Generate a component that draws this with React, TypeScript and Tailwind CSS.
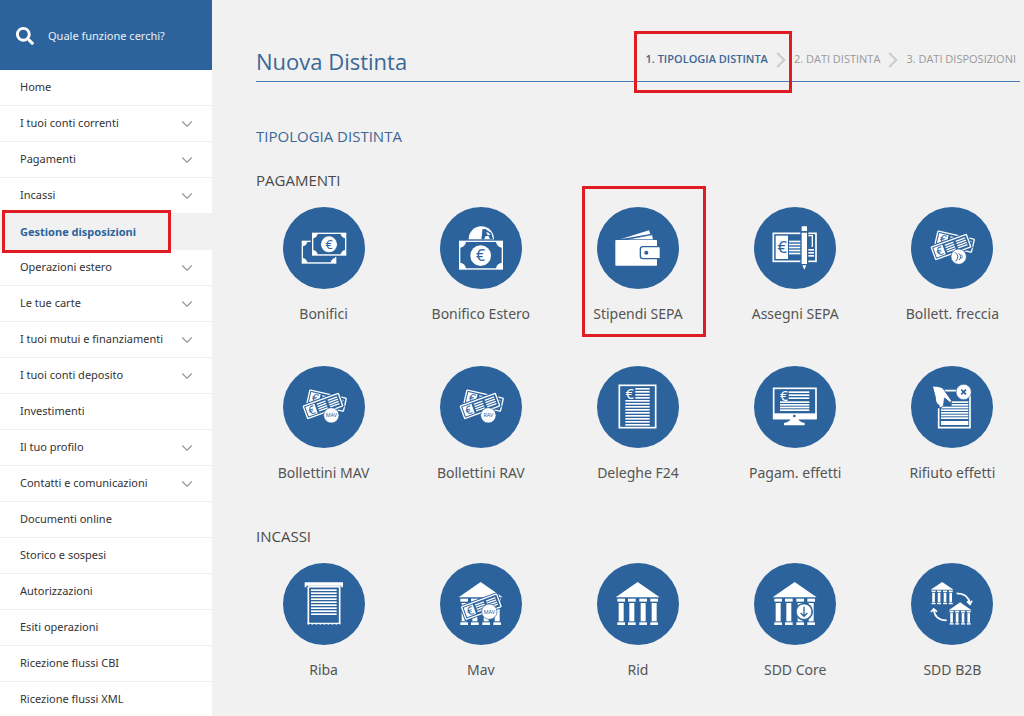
import { Fragment, type ReactNode } from 'react';
import { ChevronDown, ChevronRight } from 'lucide-react';
import { FaSearch } from 'react-icons/fa';

const BLUE = '#2c639c';

const menu = [
  { label: 'Home' },
  { label: 'I tuoi conti correnti', expandable: true },
  { label: 'Pagamenti', expandable: true },
  { label: 'Incassi', expandable: true },
  { label: 'Gestione disposizioni', active: true },
  { label: 'Operazioni estero', expandable: true },
  { label: 'Le tue carte', expandable: true },
  { label: 'I tuoi mutui e finanziamenti', expandable: true },
  { label: 'I tuoi conti deposito', expandable: true },
  { label: 'Investimenti' },
  { label: 'Il tuo profilo', expandable: true },
  { label: 'Contatti e comunicazioni', expandable: true },
  { label: 'Documenti online' },
  { label: 'Storico e sospesi' },
  { label: 'Autorizzazioni' },
  { label: 'Esiti operazioni' },
  { label: 'Ricezione flussi CBI' },
  { label: 'Ricezione flussi XML' },
];

const steps = ['1. TIPOLOGIA DISTINTA', '2. DATI DISTINTA', '3. DATI DISPOSIZIONI'];

type BoxProps = { x: number; y: number; w: number; h: number };

// All icons share a 246 unit canvas, three units to a pixel
const Euro = ({ x, y, size, fill = BLUE }: { x: number; y: number; size: number; fill?: string }) => (
  <text x={x} y={y + size * 0.36} fontSize={size} fill={fill} textAnchor="middle">€</text>
);

const Lines = ({ x, y, w, count, step = 9, h = 5 }: { x: number; y: number; w: number; count: number; step?: number; h?: number }) => (
  <>
    {[...Array(count)].map((_, i) => (
      <rect key={i} x={x} y={y + i * step} width={w} height={h} fill="white" />
    ))}
  </>
);

const Banknote = ({ x, y, w, h, corner = 17 }: BoxProps & { corner?: number }) => (
  <>
    <rect x={x - 4} y={y - 4} width={w + 8} height={h + 8} fill={BLUE} />
    <rect x={x} y={y} width={w} height={h} fill="white" />
    <path
      fill={BLUE}
      d={`M${x + corner} ${y + 4}H${x + w - corner}A${corner} ${corner} 0 0 0 ${x + w - 4} ${y + corner}V${y + h - corner}A${corner} ${corner} 0 0 0 ${x + w - corner} ${y + h - 4}H${x + corner}A${corner} ${corner} 0 0 0 ${x + 4} ${y + h - corner}V${y + corner}A${corner} ${corner} 0 0 0 ${x + corner} ${y + 4}Z`}
    />
  </>
);

const Slip = ({ cx, cy, angle }: { cx: number; cy: number; angle: number }) => (
  <g transform={`translate(${cx} ${cy}) rotate(${angle})`}>
    <rect x="-61" y="-25" width="122" height="50" rx="3" fill={BLUE} />
    <rect x="-56" y="-20" width="112" height="40" rx="2" fill={BLUE} stroke="white" strokeWidth="4" />
    <rect x="-51" y="-15" width="29" height="30" fill="white" />
    <Euro x={-36} y={0} size={34} />
    <Lines x={-16} y={-13} w={28} count={4} step={7} h={4} />
    <Lines x={19} y={-13} w={30} count={4} step={7} h={4} />
  </g>
);

const Badge = ({ x, y, r = 23, children }: { x: number; y: number; r?: number; children: ReactNode }) => (
  <>
    <circle cx={x} cy={y} r={r} fill="white" stroke={BLUE} strokeWidth="2" />
    {children}
  </>
);

const BadgeText = ({ x, y, children }: { x: number; y: number; children: string }) => (
  <Badge x={x} y={y}>
    <text x={x} y={y + 6} fontSize="16" fill={BLUE} textAnchor="middle">{children}</text>
  </Badge>
);

const Bank = () => (
  <g fill="white">
    <path d="M122 57L188 103H56Z" />
    {[61, 93, 127, 160].map((x) => (
      <Fragment key={x}>
        <rect x={x} y="107" width="23" height="9" />
        <rect x={x + 4} y="120" width="15" height="55" />
        <rect x={x} y="178" width="23" height="8" />
      </Fragment>
    ))}
  </g>
);

const SlipPair = () => (
  <>
    <Slip cx={131} cy={104} angle={13} />
    <Slip cx={120} cy={120} angle={-20} />
  </>
);

const icons: Record<string, ReactNode> = {
  transfer: (
    <>
      <Banknote x={56} y={101} w={104} h={69} />
      <Banknote x={87} y={77} w={103} h={69} />
      <circle cx="138" cy="112" r="24" fill="white" />
      <Euro x={138} y={112} size={38} />
    </>
  ),
  foreign: (
    <>
      <circle cx="124" cy="96" r="38" fill="white" />
      <path fill={BLUE} d="M127 67l9-1 18 12 5 18h-9l-5-10-9 2-3 9h-9l2-16z" />
      <path fill="white" d="M138 75l9 3 4 7-8-1z" />
      <Banknote x={57} y={101} w={132} h={87} corner={21} />
      <circle cx="122" cy="146" r="31" fill="white" />
      <Euro x={122} y={146} size={48} />
    </>
  ),
  wallet: (
    <>
      <path fill="white" d="M70 97L156 70l4 11z" />
      <path fill="white" stroke={BLUE} strokeWidth="2" d="M86 98l80-15 3 15z" />
      <rect x="55" y="99" width="125" height="77" rx="2" fill="white" />
      <path fill="white" stroke={BLUE} strokeWidth="4" d="M190 119h-52q-8 0-8 8v20q0 8 8 8h52z" />
      <circle cx="148" cy="137" r="6" fill={BLUE} />
    </>
  ),
  cheque: (
    <>
      <rect x="58" y="79" width="128" height="84" fill="none" stroke="white" strokeWidth="5" />
      <rect x="65" y="86" width="37" height="70" fill="white" />
      <Euro x={85} y={121} size={50} />
      <Lines x={105} y={101} w={36} count={5} />
      <Lines x={162} y={126} w={18} count={3} />
      <path d="M162 86h13v34" fill="none" stroke="white" strokeWidth="4" />
      <path d="M139 54h24v122l-12 18-12-18z" fill={BLUE} />
      <path d="M143 58h16v14h-16zM143 77h16v94h-16zM145 175h12l-6 13z" fill="white" />
    </>
  ),
  arrowSlip: (
    <>
      <SlipPair />
      <Badge x={143} y={149}>
        <path d="M132 136q16 12 2 27M143 139q12 10 1 20" fill="none" stroke={BLUE} strokeWidth="3" />
        <path d="M151 142q6 7 0 14" fill="none" stroke={BLUE} strokeWidth="2" />
      </Badge>
    </>
  ),
  mavSlip: (
    <>
      <SlipPair />
      <BadgeText x={145} y={148}>MAV</BadgeText>
    </>
  ),
  ravSlip: (
    <>
      <SlipPair />
      <BadgeText x={145} y={148}>RAV</BadgeText>
    </>
  ),
  form: (
    <>
      <rect x="67" y="58" width="109" height="127" fill="none" stroke="white" strokeWidth="5" />
      <Euro x={98} y={82} size={44} fill="white" />
      <Lines x={115} y={66} w={43} count={4} />
      <Lines x={85} y={102} w={73} count={9} />
    </>
  ),
  monitor: (
    <>
      <rect x="59" y="67" width="127" height="90" fill="none" stroke="white" strokeWidth="5" />
      <Euro x={90} y={90} size={42} fill="white" />
      <Lines x={104} y={76} w={62} count={3} />
      <Lines x={78} y={106} w={88} count={4} step={8} />
      <rect x="57" y="142" width="131" height="18" fill="white" />
      <circle cx="121" cy="150" r="4" fill={BLUE} />
      <path d="M109 158h25q-1 9 18 13v7H90v-7q19-4 19-13z" fill="white" />
    </>
  ),
  reject: (
    <>
      <path d="M98 74h79v111H83v-58" fill="none" stroke="white" strokeWidth="5" />
      <Lines x={122} y={106} w={50} count={2} step={8} />
      <Lines x={90} y={122} w={82} count={5} step={8} />
      <rect x="90" y="165" width="82" height="12" fill="white" />
      <path
        d="M64 60q12 0 24 3 9 2 13 11l21 30q0 6-6 5l-14-12q-3-1-2 3l-2 18q-3 7-10 7-4 0-4-7-12-7-11-24z"
        fill="white"
        stroke={BLUE}
        strokeWidth="3"
      />
      <Badge x={158} y={78}>
        <path d="M151 71l14 14M165 71l-14 14" stroke={BLUE} strokeWidth="5" />
      </Badge>
    </>
  ),
  receipt: (
    <>
      <path d="M65 58h115v15h-5v-5H70v5h-5z" fill="white" />
      <path d="M76 71h94v112M76 71v112" fill="none" stroke="white" strokeWidth="5" />
      <path d="M74 185v-6h98v6l-6-3-6 3-6-3-6 3-6-3-6 3-6-3-6 3-6-3-6 3-6-3-6 3-6-3-6 3-6-3-6 3z" fill="white" />
      <Lines x={84} y={79} w={77} count={9} />
    </>
  ),
  bankMav: (
    <>
      <Bank />
      <Slip cx={124} cy={131} angle={-20} />
      <BadgeText x={148} y={146}>MAV</BadgeText>
    </>
  ),
  bank: <Bank />,
  bankDown: (
    <>
      <Bank />
      <circle cx="150" cy="146" r="27" fill={BLUE} />
      <Badge x={150} y={146}>
        <path d="M150 131v28M140 150l10 10 10-10" fill="none" stroke={BLUE} strokeWidth="4" />
      </Badge>
    </>
  ),
  bankExchange: (
    <>
      <g transform="translate(30 27) scale(.52)"><Bank /></g>
      <g transform="translate(84 88) scale(.52)"><Bank /></g>
      <path d="M137 91q34 0 40 30M168 115l9 9 6-11M107 172q-35 0-39-33M60 147l8-9 10 8" fill="none" stroke="white" strokeWidth="5" />
    </>
  ),
};

const sections = [
  {
    title: 'PAGAMENTI',
    items: [
      { label: 'Bonifici', icon: 'transfer' },
      { label: 'Bonifico Estero', icon: 'foreign' },
      { label: 'Stipendi SEPA', icon: 'wallet', marked: true },
      { label: 'Assegni SEPA', icon: 'cheque' },
      { label: 'Bollett. freccia', icon: 'arrowSlip' },
      { label: 'Bollettini MAV', icon: 'mavSlip' },
      { label: 'Bollettini RAV', icon: 'ravSlip' },
      { label: 'Deleghe F24', icon: 'form' },
      { label: 'Pagam. effetti', icon: 'monitor' },
      { label: 'Rifiuto effetti', icon: 'reject' },
    ],
  },
  {
    title: 'INCASSI',
    items: [
      { label: 'Riba', icon: 'receipt' },
      { label: 'Mav', icon: 'bankMav' },
      { label: 'Rid', icon: 'bank' },
      { label: 'SDD Core', icon: 'bankDown' },
      { label: 'SDD B2B', icon: 'bankExchange' },
    ],
  },
];

const Sidebar = () => (
  <aside className="w-[212px] shrink-0 bg-white font-['Noto_Sans',sans-serif] text-[11px]">
    <label className="flex h-[70px] items-center gap-[14px] bg-[#2c639c] pt-[2px] pl-4 text-white">
      <FaSearch className="size-[18px] shrink-0" />
      <input
        type="search"
        aria-label="Cerca una funzione"
        placeholder="Quale funzione cerchi?"
        className="w-full min-w-0 bg-transparent outline-none placeholder:text-white/90"
      />
    </label>
    <nav>
      <ul>
        {menu.map((item) => (
          <li key={item.label} className="relative">
            <a
              href="#"
              className={
                item.active
                  ? 'flex h-9 items-center bg-[#f1f1f1] pr-4 pl-5 font-bold text-[#2c639c]'
                  : 'flex h-9 items-center justify-between border-b border-[#efefef] pr-4 pl-5 text-[#333]'
              }
            >
              {item.label}
              {item.expandable && <ChevronDown size={18} strokeWidth={1.5} className="text-[#999]" />}
            </a>
            {item.active && (
              <span className="pointer-events-none absolute -top-1 left-[2px] z-10 h-[43px] w-[169px] border-3 border-[#e01b22]" />
            )}
          </li>
        ))}
      </ul>
    </nav>
  </aside>
);

const Steps = () => (
  <ol className="flex items-center pr-1 text-[11px] whitespace-nowrap text-[#999]">
    {steps.map((step, index) => (
      <Fragment key={step}>
        {index > 0 && (
          <li aria-hidden="true">
            <ChevronRight size={26} strokeWidth={2} className="text-[#ccc]" />
          </li>
        )}
        <li className="relative">
          <a href="#" className={index === 0 ? 'font-semibold text-[#3c6796]' : ''}>{step}</a>
          {index === 0 && (
            <span className="pointer-events-none absolute -top-5 -right-6 -left-3 h-[62px] border-3 border-[#e01b22]" />
          )}
        </li>
      </Fragment>
    ))}
  </ol>
);

export default function App() {
  return (
    <div className="flex min-h-screen overflow-hidden bg-[#f1f1f1] font-['Open_Sans',sans-serif] text-[#4a4a4a]">
      <Sidebar />
      <main className="min-w-0 grow pt-[38px] pr-1 pl-11">
        <header className="flex h-11 items-center justify-between border-b border-[#4a7db5]">
          <h1 className="pt-1 text-[22px] whitespace-nowrap text-[#3c6796]">Nuova Distinta</h1>
          <Steps />
        </header>
        <h2 className="mt-11 text-[15px] leading-5 text-[#3c6796]">TIPOLOGIA DISTINTA</h2>
        <div className="mt-6 flex flex-col gap-[43px]">
          {sections.map((section) => (
            <section key={section.title}>
              <h3 className="text-[15px] leading-5">{section.title}</h3>
              <ul className="-mx-[11px] mt-[17px] grid grid-cols-5 gap-y-[42px] font-['Noto_Sans',sans-serif]">
                {section.items.map((item) => (
                  <li key={item.label} className="relative">
                    <a href="#" className="flex flex-col items-center gap-[15px]">
                      <svg viewBox="0 0 246 246" className="size-[82px] rounded-full bg-[#2c639c]" aria-hidden="true">
                        {icons[item.icon]}
                      </svg>
                      <span className="text-sm leading-5 text-[#555]">{item.label}</span>
                    </a>
                    {item.marked && (
                      <span className="pointer-events-none absolute -top-[21px] left-[23px] h-[151px] w-[124px] border-3 border-[#e01b22]" />
                    )}
                  </li>
                ))}
              </ul>
            </section>
          ))}
        </div>
      </main>
    </div>
  );
}
